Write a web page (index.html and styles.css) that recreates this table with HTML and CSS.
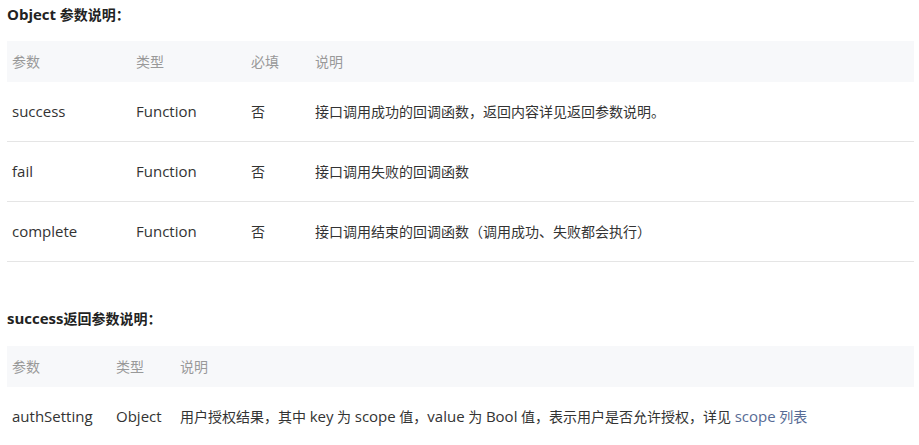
FILE: index.html
```html
<!DOCTYPE html>
<html lang="zh-CN">
<head>
<meta charset="utf-8">
<title>Object 参数说明</title>
<link rel="stylesheet" href="styles.css">
</head>
<body>
<div class="doc">
  <p class="title first"><span class="en">Object</span> 参数说明：</p>
  <table class="params t1">
    <colgroup>
      <col class="c-name"><col class="c-type"><col class="c-req"><col>
    </colgroup>
    <thead>
      <tr><th>参数</th><th>类型</th><th>必填</th><th>说明</th></tr>
    </thead>
    <tbody>
      <tr><td class="en">success</td><td class="en">Function</td><td>否</td><td>接口调用成功的回调函数，返回内容详见返回参数说明。</td></tr>
      <tr><td class="en">fail</td><td class="en">Function</td><td>否</td><td>接口调用失败的回调函数</td></tr>
      <tr><td class="en">complete</td><td class="en">Function</td><td>否</td><td>接口调用结束的回调函数（调用成功、失败都会执行）</td></tr>
    </tbody>
  </table>

  <p class="title second"><span class="en">success</span>返回参数说明：</p>
  <table class="params t2">
    <colgroup>
      <col class="c2-name"><col class="c2-type"><col>
    </colgroup>
    <thead>
      <tr><th>参数</th><th>类型</th><th>说明</th></tr>
    </thead>
    <tbody>
      <tr><td class="en">authSetting</td><td class="en">Object</td><td>用户授权结果，其中 <span class="en">key</span> 为 <span class="en">scope</span> 值，<span class="en">value</span> 为 <span class="en">Bool</span> 值，表示用户是否允许授权，详见 <a class="link" href="#"><span class="en">scope</span> 列表</a></td></tr>
    </tbody>
  </table>
</div>
</body>
</html>
```
FILE: styles.css
```css
html, body {
  margin: 0;
  padding: 0;
  background: #ffffff;
}
body {
  font-family: "Open Sans", "Noto Sans CJK SC", sans-serif;
  font-size: 14px;
  color: #333333;
  text-spacing-trim: space-all;
}
.doc {
  padding: 0 5px 0 7px;
}
.en {
  font-size: 15px;
}
.title {
  margin: 0;
  font-weight: bold;
  font-size: 14px;
  line-height: 20px;
  height: 20px;
  overflow: hidden;
  color: #222;
}
.title.first {
  margin-top: 4px;
  margin-bottom: 17px;
}
.title.second {
  margin-top: 46px;
  margin-bottom: 18px;
}
.params {
  width: 100%;
  border-collapse: collapse;
  table-layout: fixed;
}
.params th {
  background: #f7f8fa;
  color: #999999;
  font-weight: normal;
  text-align: left;
  height: 39px;
  padding: 0 5px 2px;
}
.params td {
  height: 57px;
  padding: 0 5px 2px;
  text-align: left;
  border-bottom: 1px solid #e5e5e5;
  color: #333333;
}
.c-name { width: 124px; }
.c-type { width: 115px; }
.c-req { width: 64px; }
.c2-name { width: 104px; }
.c2-type { width: 64px; }
.link {
  color: #576b95;
  text-decoration: none;
}
```
